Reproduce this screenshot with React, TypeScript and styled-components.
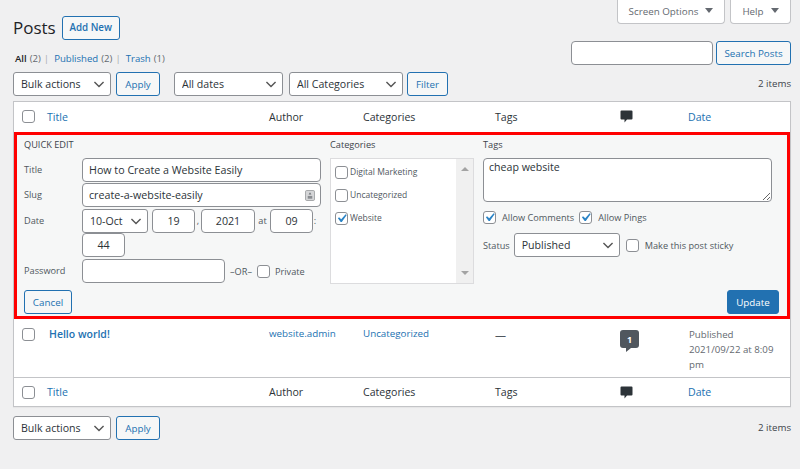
import React from 'react';
import styled, { createGlobalStyle } from 'styled-components';

const chevron = `url("data:image/svg+xml,%3Csvg xmlns='http://www.w3.org/2000/svg' width='20' height='20' viewBox='0 0 20 20'%3E%3Cpath d='M3.5 7l6.5 6.5L16.500 7' fill='none' stroke='%23555' stroke-width='2'/%3E%3C/svg%3E")`;
const tick = `url("data:image/svg+xml,%3Csvg xmlns='http://www.w3.org/2000/svg' viewBox='0 0 20 20'%3E%3Cpath d='M14.83 4.89l1.34.94-5.81 8.38H9.02L5.78 9.67l1.34-1.25 2.57 2.4z' fill='%232b84c6'/%3E%3C/svg%3E")`;

const GlobalStyle = createGlobalStyle`
  html, body { margin: 0; padding: 0; background: #f0f0f1; }
  body {
    width: 800px;
    height: 469px;
    overflow: hidden;
    font-family: 'Open Sans', 'Liberation Sans', sans-serif;
    font-size: 10px;
    color: #3c434a;
  }
  #root { height: 100%; }
  * { box-sizing: border-box; }
`;

const Page = styled.div`
  display: flex;
  flex-direction: column;
  padding: 0 9px 0 13px;
`;

const ScreenMeta = styled.div`
  display: flex;
  justify-content: flex-end;
  gap: 5px;
  height: 24px;
`;

const MetaTab = styled.div<{ $w: number }>`
  display: flex;
  align-items: center;
  justify-content: center;
  gap: 7px;
  width: ${(p) => p.$w}px;
  height: 24px;
  background: #fff;
  border: 1px solid #c3c4c7;
  border-top: 0;
  border-radius: 0 0 4px 4px;
  font-size: 9.8px;
  color: #646970;
`;

const Caret = styled.span`
  width: 0;
  height: 0;
  margin-bottom: 2px;
  border-left: 4px solid transparent;
  border-right: 4px solid transparent;
  border-top: 5px solid #646970;
`;

const TitleRow = styled.div`
  display: flex;
  align-items: center;
  gap: 6px;
  margin-top: -8px;
  height: 23px;
`;

const Heading = styled.h1`
  min-width: 40px;
  margin: 0 0 1px;
  font-size: 17px;
  font-weight: 400;
  color: #1d2327;
`;

const OutlineButton = styled.button<{ $w?: number }>`
  display: inline-flex;
  align-items: center;
  justify-content: center;
  flex: none;
  width: ${(p) => (p.$w ? `${p.$w}px` : 'auto')};
  height: 24px;
  padding: 0;
  background: #f6f7f7;
  border: 1px solid #2271b1;
  border-radius: 3px;
  color: #2271b1;
  font-family: inherit;
  font-size: 9.8px;
`;

const AddNew = styled(OutlineButton)`
  font-weight: 600;
`;

const SearchRow = styled.div`
  display: flex;
  align-items: flex-start;
  gap: 3px;
  height: 24px;
  margin-top: 2px;
`;

const SubNav = styled.ul`
  display: flex;
  align-items: center;
  align-self: flex-start;
  margin: 11px 0 0 2px;
  padding: 0;
  list-style: none;
  flex: 1;
  height: 12px;
  color: #646970;
  font-size: 9.6px;
`;

const SubItem = styled.li`
  display: flex;
  gap: 3px;
  & + &::before {
    content: '|';
    color: #a7aaad;
    margin: 0 2px 0 3px;
  }
`;

const Current = styled.strong`
  color: #1d2327;
  font-weight: 600;
`;

const SubLink = styled.a`
  color: #2271b1;
`;

const Field = styled.input<{ $w?: number; $center?: boolean }>`
  display: block;
  width: ${(p) => (p.$w ? `${p.$w}px` : '100%')};
  height: 24px;
  flex: none;
  margin: 0;
  padding: 0 6px;
  background: #fff;
  border: 1px solid #8c8f94;
  border-radius: 4px;
  color: #2c3338;
  font-family: inherit;
  font-size: 10.7px;
  text-align: ${(p) => (p.$center ? 'center' : 'left')};
`;

const Select = styled.select<{ $w: number }>`
  appearance: none;
  flex: none;
  width: ${(p) => p.$w}px;
  height: 24px;
  margin: 0;
  padding: 0 20px 0 7px;
  background: #fff ${chevron} no-repeat right 4px center / 14px 14px;
  border: 1px solid #8c8f94;
  border-radius: 3px;
  color: #2c3338;
  font-family: inherit;
  font-size: 10.6px;
`;

const Toolbar = styled.div<{ $top: number }>`
  display: flex;
  align-items: center;
  height: 24px;
  margin-top: ${(p) => p.$top}px;
`;

const Gap = styled.span<{ $w: number }>`
  flex: none;
  width: ${(p) => p.$w}px;
`;

const ItemCount = styled.div`
  margin-left: auto;
  padding-bottom: 1px;
  color: #3c434a;
  font-size: 9.7px;
`;

const Table = styled.div`
  margin-top: 5px;
  background: #fff;
  border: 1px solid #c3c4c7;
  box-shadow: 0 1px 1px rgba(0, 0, 0, 0.04);
`;

const Row = styled.div<{ $head?: boolean; $foot?: boolean }>`
  display: grid;
  grid-template-columns: 33px 222px 94px 132px 124px 69px 1fr;
  align-items: ${(p) => (p.$head || p.$foot ? 'center' : 'start')};
  height: ${(p) => (p.$head ? 29 : p.$foot ? 29 : 58)}px;
  padding-top: ${(p) => (p.$head || p.$foot ? 0 : 8)}px;
  ${(p) => (p.$foot ? 'border-top: 1px solid #c3c4c7;' : '')}
`;

const Check = styled.input.attrs({ type: 'checkbox' })`
  appearance: none;
  display: block;
  flex: none;
  width: 13px;
  height: 13px;
  margin: 0;
  background: #fff no-repeat center / 17px 17px;
  border: 1px solid #8c8f94;
  border-radius: 3px;
  &:checked {
    background-image: ${tick};
  }
`;

const CheckCell = styled.div`
  padding-left: 8px;
`;

const BodyCheckCell = styled(CheckCell)`
  padding-top: 1px;
`;

const ColLink = styled.a`
  color: #2271b1;
  font-size: 10.6px;
`;

const ColText = styled.span`
  color: #2c3338;
  font-size: 10.6px;
`;

const PostTitle = styled.a`
  color: #2271b1;
  font-size: 10.5px;
  font-weight: 600;
  padding-left: 2px;
`;

const CellLink = styled.a`
  color: #2271b1;
  font-size: 9.8px;
`;

const Dash = styled.span`
  font-size: 11px;
  color: #50575e;
`;

const DateCell = styled.div`
  color: #646970;
  font-size: 9.7px;
  line-height: 15px;
  padding-left: 1px;
  width: 96px;
`;

const CommentCount = styled.div`
  position: relative;
  display: flex;
  align-items: center;
  justify-content: center;
  width: 19px;
  height: 18px;
  margin: 3px 0 0 1px;
  background: #50575e;
  border-radius: 3px;
  color: #fff;
  font-size: 9px;
  font-weight: 700;
  &::after {
    content: '';
    position: absolute;
    top: 18px;
    left: 6px;
    border-top: 4px solid #50575e;
    border-right: 5px solid transparent;
  }
`;

const QuickEdit = styled.div`
  display: flex;
  flex-direction: column;
  justify-content: space-between;
  height: 187px;
  margin-top: 1px;
  padding: 3px 8px 2px 7px;
  background: #f6f7f7;
  border: 3px solid #f00;
`;

const EditColumns = styled.div`
  display: flex;
`;

const LeftCol = styled.div`
  flex: none;
  width: 306px;
`;

const ColTitle = styled.div`
  height: 14px;
  margin-bottom: 6px;
  font-size: 9.2px;
  line-height: 14px;
  color: #3c434a;
`;

const FormRow = styled.div<{ $h?: number }>`
  position: relative;
  display: flex;
  align-items: flex-start;
  height: ${(p) => p.$h ?? 25}px;
  padding-left: 58px;
`;

const RowLabel = styled.span`
  position: absolute;
  left: 0;
  top: 5px;
  font-size: 9.2px;
  color: #50575e;
`;

const Sep = styled.span<{ $w: number }>`
  flex: none;
  width: ${(p) => p.$w}px;
  padding-top: 5px;
  text-align: center;
  font-size: 9.2px;
  color: #50575e;
`;

const OrLabel = styled(Sep)`
  padding-top: 0;
`;

const FullField = styled(Field)`
  width: 239px;
`;

const SlugWrap = styled.div`
  position: relative;
  display: flex;
  align-items: center;
  width: 239px;
`;

const SlugKey = styled.svg`
  position: absolute;
  right: 6px;
  width: 10px;
  height: 11px;
`;

const Note = styled.span`
  font-size: 9.2px;
  color: #50575e;
`;

const PrivateRow = styled.div`
  display: flex;
  align-items: center;
  height: 24px;
`;

const CatCol = styled.div`
  flex: none;
  width: 153px;
`;

const CatBox = styled.div`
  display: flex;
  justify-content: space-between;
  width: 144px;
  height: 126px;
  background: #fff;
  border: 1px solid #dcdcde;
`;

const CatList = styled.div`
  display: flex;
  flex-direction: column;
  gap: 10px;
  padding: 7px 0 0 4px;
`;

const CatItem = styled.label`
  display: flex;
  align-items: flex-start;
  gap: 2px;
  height: 13px;
  font-size: 8.5px;
  line-height: 11px;
  color: #50575e;
`;

const Scrollbar = styled.div`
  display: flex;
  flex-direction: column;
  justify-content: space-between;
  align-items: center;
  width: 17px;
  padding: 8px 0;
  background: #f0f0f0;
`;

const ArrowUp = styled.span`
  border-left: 4px solid transparent;
  border-right: 4px solid transparent;
  border-bottom: 4px solid #a3a3a3;
`;

const ArrowDown = styled.span`
  border-left: 4px solid transparent;
  border-right: 4px solid transparent;
  border-top: 4px solid #a3a3a3;
`;

const TagCol = styled.div`
  flex: none;
  width: 289px;
`;

const TagArea = styled.textarea`
  display: block;
  width: 289px;
  height: 44px;
  margin: 0;
  padding: 1px 5px;
  background: #fff;
  border: 1px solid #8c8f94;
  border-radius: 4px;
  color: #2c3338;
  font-family: inherit;
  font-size: 10.6px;
`;

const Inline = styled.div<{ $top: number }>`
  display: flex;
  align-items: center;
  margin-top: ${(p) => p.$top}px;
  font-size: 9.2px;
  color: #50575e;
`;

const InlineLabel = styled.label`
  display: flex;
  align-items: center;
  gap: 6px;
  margin-right: 5px;
`;

const EditActions = styled.div`
  display: flex;
  justify-content: space-between;
`;

const CancelButton = styled(OutlineButton)`
  width: 48px;
`;

const UpdateButton = styled(OutlineButton)`
  width: 52px;
  background: #2271b1;
  color: #fff;
`;

const CommentIcon = () => (
  <svg width="13" height="13" viewBox="0 0 13 13" style={{ display: 'block', marginLeft: 1 }}>
    <path d="M1.500 0.5h10a1 1 0 0 1 1 1v7a1 1 0 0 1-1 1H7l-2.500 3v-3h-3a1 1 0 0 1-1-1v-7a1 1 0 0 1 1-1z" fill="#2c3338" />
  </svg>
);

const TableHead = ({ foot }: { foot?: boolean }) => (
  <Row $head={!foot} $foot={foot}>
    <CheckCell>
      <Check />
    </CheckCell>
    <ColLink>Title</ColLink>
    <ColText>Author</ColText>
    <ColText>Categories</ColText>
    <ColText>Tags</ColText>
    <CommentIcon />
    <ColLink>Date</ColLink>
  </Row>
);

const BulkBar = ({ top, children }: { top: number; children?: React.ReactNode }) => (
  <Toolbar $top={top}>
    <Select $w={98} defaultValue="Bulk actions">
      <option>Bulk actions</option>
    </Select>
    <Gap $w={5} />
    <OutlineButton $w={44}>Apply</OutlineButton>
    {children}
    <ItemCount>2 items</ItemCount>
  </Toolbar>
);

export default function App() {
  return (
    <Page>
      <GlobalStyle />
      <ScreenMeta>
        <MetaTab $w={108}>
          Screen Options <Caret />
        </MetaTab>
        <MetaTab $w={61}>
          Help <Caret />
        </MetaTab>
      </ScreenMeta>
      <TitleRow>
        <Heading>Posts</Heading>
        <AddNew $w={58}>Add New</AddNew>
      </TitleRow>
      <SearchRow>
        <SubNav>
          <SubItem>
            <Current>All</Current> (2)
          </SubItem>
          <SubItem>
            <SubLink>Published</SubLink> (2)
          </SubItem>
          <SubItem>
            <SubLink>Trash</SubLink> (1)
          </SubItem>
        </SubNav>
        <Field $w={142} readOnly />
        <OutlineButton $w={75}>Search Posts</OutlineButton>
      </SearchRow>
      <BulkBar top={7}>
        <Gap $w={14} />
        <Select $w={109} defaultValue="All dates">
          <option>All dates</option>
        </Select>
        <Gap $w={6} />
        <Select $w={114} defaultValue="All Categories">
          <option>All Categories</option>
        </Select>
        <Gap $w={4} />
        <OutlineButton $w={41}>Filter</OutlineButton>
      </BulkBar>
      <Table>
        <TableHead />
        <QuickEdit>
          <EditColumns>
            <LeftCol>
              <ColTitle>QUICK EDIT</ColTitle>
              <FormRow>
                <RowLabel>Title</RowLabel>
                <FullField defaultValue="How to Create a Website Easily" />
              </FormRow>
              <FormRow $h={26}>
                <RowLabel>Slug</RowLabel>
                <SlugWrap>
                  <FullField defaultValue="create-a-website-easily" />
                  <SlugKey viewBox="0 0 11 12">
                    <rect x="0.5" y="0.5" width="10" height="11" rx="1.500" fill="#d5d6d8" stroke="#a0a2a5" />
                    <path d="M5.500 2.500l1.500 2.500H4z" fill="#6d7075" />
                    <rect x="3" y="6.500" width="5" height="3" fill="#8a8d91" />
                  </SlugKey>
                </SlugWrap>
              </FormRow>
              <FormRow $h={24}>
                <RowLabel>Date</RowLabel>
                <Select $w={66} defaultValue="10-Oct">
                  <option>10-Oct</option>
                </Select>
                <Gap $w={4} />
                <Field $w={43} $center defaultValue="19" />
                <Sep $w={6}>,</Sep>
                <Field $w={54} $center defaultValue="2021" />
                <Sep $w={15}>at</Sep>
                <Field $w={43} $center defaultValue="09" />
                <Sep $w={4}>:</Sep>
              </FormRow>
              <FormRow $h={26}>
                <Field $w={43} $center defaultValue="44" />
              </FormRow>
              <FormRow>
                <RowLabel>Password</RowLabel>
                <Field $w={143} />
                <PrivateRow>
                  <OrLabel $w={32}>–OR–</OrLabel>
                  <Check />
                  <Gap $w={5} />
                  <Note>Private</Note>
                </PrivateRow>
              </FormRow>
            </LeftCol>
            <CatCol>
              <ColTitle>Categories</ColTitle>
              <CatBox>
                <CatList>
                  <CatItem>
                    <Check /> Digital Marketing
                  </CatItem>
                  <CatItem>
                    <Check /> Uncategorized
                  </CatItem>
                  <CatItem>
                    <Check defaultChecked /> Website
                  </CatItem>
                </CatList>
                <Scrollbar>
                  <ArrowUp />
                  <ArrowDown />
                </Scrollbar>
              </CatBox>
            </CatCol>
            <TagCol>
              <ColTitle>Tags</ColTitle>
              <TagArea defaultValue="cheap website" />
              <Inline $top={9}>
                <InlineLabel>
                  <Check defaultChecked /> Allow Comments
                </InlineLabel>
                <InlineLabel>
                  <Check defaultChecked /> Allow Pings
                </InlineLabel>
              </Inline>
              <Inline $top={9}>
                <Note>Status</Note>
                <Gap $w={4} />
                <Select $w={106} defaultValue="Published">
                  <option>Published</option>
                </Select>
                <Gap $w={6} />
                <InlineLabel>
                  <Check /> Make this post sticky
                </InlineLabel>
              </Inline>
            </TagCol>
          </EditColumns>
          <EditActions>
            <CancelButton>Cancel</CancelButton>
            <UpdateButton>Update</UpdateButton>
          </EditActions>
        </QuickEdit>
        <Row>
          <BodyCheckCell>
            <Check />
          </BodyCheckCell>
          <PostTitle>Hello world!</PostTitle>
          <CellLink>website.admin</CellLink>
          <CellLink>Uncategorized</CellLink>
          <Dash>—</Dash>
          <CommentCount>1</CommentCount>
          <DateCell>
            Published
            <br />
            2021/09/22 at 8:09 pm
          </DateCell>
        </Row>
        <TableHead foot />
      </Table>
      <BulkBar top={9} />
    </Page>
  );
}
